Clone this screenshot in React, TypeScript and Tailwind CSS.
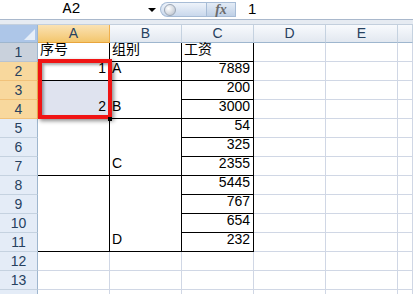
import React from 'react';

const hdr =
  'flex items-center justify-center border-r border-b border-r-[#c5d2e0] border-b-[#9eb6ce] bg-linear-to-b from-[#f8fafd] to-[#e2e8f0] text-[14px] text-[#27415f]';
const rh =
  'flex items-center justify-center border-r border-b border-r-[#9eb6ce] border-b-[#c5d2e0] bg-[#e4ecf7] text-[14px] text-[#27415f]';
const rhSel =
  'flex items-center justify-center border-r border-b border-r-[#f0b04e] border-b-[#f1c27a] bg-[#f8d89d] text-[14px] text-[#27415f]';
const grid = 'border-r border-b border-[#d0d7e5] bg-white';
const tb = 'border-r border-b border-black bg-white flex items-end pb-[1px] text-[14px] text-black';
const num = tb + ' justify-end pr-[3px]';
const txt = tb + ' pl-[2px]';

function Empty() {
  return (
    <>
      <div className={grid} />
      <div className={grid} />
      <div className={grid} />
    </>
  );
}

export default function App() {
  return (
    <div className="relative h-[294px] w-[413px] overflow-hidden bg-white font-['Liberation_Sans','Noto_Sans_CJK_SC',sans-serif]">
      {/* formula bar */}
      <div className="flex h-[20px] items-stretch border-b border-[#a9b8cc] bg-white">
        <div className="flex w-[143px] items-center justify-center pt-[2px] font-['Liberation_Mono',monospace] text-[15px] text-black">
          A2
        </div>
        <div className="flex w-[17px] items-center justify-center">
          <div className="h-0 w-0 border-x-[4px] border-t-[4px] border-x-transparent border-t-black" />
        </div>
        <div className="my-[2px] flex w-[46px] items-center rounded-l-full border border-r-0 border-[#a7bcd6] bg-linear-to-b from-[#eef3fa] to-[#c9d8ec] pl-[3px]">
          <div className="h-[12px] w-[12px] rounded-full border border-[#9aa6b5] bg-radial-[at_35%_35%] from-white to-[#b4bcc8]" />
        </div>
        <div className="my-[2px] flex w-[30px] items-center justify-center border border-[#a7bcd6] bg-linear-to-b from-[#e4ecf6] to-[#bfd0e6] font-['Liberation_Serif',serif] text-[14px] font-bold italic text-[#6b6b6b]">
          fx
        </div>
        <div className="flex flex-1 items-center pl-[12px] text-[15px] text-black">1</div>
      </div>
      <div className="h-[5px] border-b border-[#c3cfdd] bg-[#e6ebf2]" />

      {/* sheet */}
      <div className="grid grid-cols-[38px_72px_72px_72px_72px_72px_1fr] grid-rows-[18px_repeat(14,19px)]">
        {/* column headers */}
        <div className="relative border-r border-b border-[#9eb6ce] bg-[#adc6e8]">
          <div className="absolute right-[2px] bottom-[2px] h-0 w-0 border-b-[11px] border-l-[11px] border-b-[#e6eef8] border-l-transparent" />
        </div>
        <div className="flex items-center justify-center border-r border-b border-r-[#f0b04e] border-b-[#e9a53c] bg-linear-to-b from-[#fae2b3] to-[#f3c66c] text-[14px] text-[#27415f]">
          A
        </div>
        <div className={hdr}>B</div>
        <div className={hdr}>C</div>
        <div className={hdr}>D</div>
        <div className={hdr}>E</div>
        <div className={hdr} />

        {/* row 1 */}
        <div className="flex items-center justify-center border-r border-b border-r-[#9eb6ce] border-b-[#b8c3d1] bg-[#c9d1dc] text-[14px] text-[#27415f]">
          1
        </div>
        <div className={txt}>序号</div>
        <div className={txt}>组别</div>
        <div className={txt}>工资</div>
        <Empty />

        {/* row 2 */}
        <div className={rhSel}>2</div>
        <div className={num}>1</div>
        <div className={txt}>A</div>
        <div className={num}>7889</div>
        <Empty />

        {/* row 3 */}
        <div className={rhSel}>3</div>
        <div className={num + ' row-span-2 !bg-[#dfe3ef]'}>2</div>
        <div className={txt + ' row-span-2'}>B</div>
        <div className={num}>200</div>
        <Empty />

        {/* row 4 */}
        <div className={rhSel}>4</div>
        <div className={num}>3000</div>
        <Empty />

        {/* row 5 */}
        <div className={rh}>5</div>
        <div className={tb + ' row-span-3'} />
        <div className={txt + ' row-span-3'}>C</div>
        <div className={num}>54</div>
        <Empty />

        <div className={rh}>6</div>
        <div className={num}>325</div>
        <Empty />

        <div className={rh}>7</div>
        <div className={num}>2355</div>
        <Empty />

        {/* row 8 */}
        <div className={rh}>8</div>
        <div className={tb + ' row-span-4'} />
        <div className={txt + ' row-span-4'}>D</div>
        <div className={num}>5445</div>
        <Empty />

        <div className={rh}>9</div>
        <div className={num}>767</div>
        <Empty />

        <div className={rh}>10</div>
        <div className={num}>654</div>
        <Empty />

        <div className={rh}>11</div>
        <div className={num}>232</div>
        <Empty />

        {['12', '13', ''].map((r, i) => (
          <React.Fragment key={i}>
            <div className={rh}>{r}</div>
            <div className={grid} />
            <div className={grid} />
            <div className={grid} />
            <Empty />
          </React.Fragment>
        ))}
      </div>

      {/* annotation box over A2:A4 */}
      <div className="absolute top-[59px] left-[38px] h-[60px] w-[74px] border-[4px] border-[#f01414] shadow-[2px_2px_4px_rgba(0,0,0,0.45),inset_2px_2px_3px_rgba(0,0,0,0.35)]" />
      <div className="absolute top-[117px] left-[108px] h-[4px] w-[4px] bg-black" />
    </div>
  );
}
